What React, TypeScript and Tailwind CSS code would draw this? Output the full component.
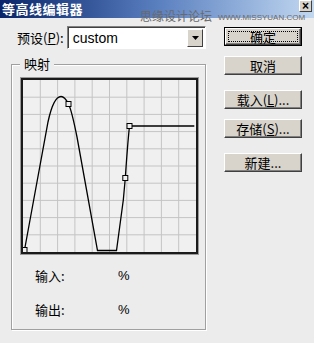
import React from "react";

const cjk = { fontFamily: '"Noto Sans CJK SC", "Liberation Sans", sans-serif' };

function Btn({ label, def = false }: { label: React.ReactNode; def?: boolean }) {
  if (def) {
    return (
      <div className="w-[78px] h-[19px] border border-black">
        <div className="w-full h-full bg-[#d8d4cc] border-t border-l border-t-white border-l-white border-r border-b border-r-[#404040] border-b-[#404040] shadow-[inset_-1px_-1px_0_#808080] flex items-center justify-center p-[2px]">
          <div className="w-full h-full border border-dotted border-black flex items-center justify-center text-[13px] leading-none text-black">
            {label}
          </div>
        </div>
      </div>
    );
  }
  return (
    <div className="w-[78px] h-[19px] bg-[#d8d4cc] border-t border-l border-t-white border-l-white border-r border-b border-r-[#404040] border-b-[#404040] shadow-[inset_-1px_-1px_0_#808080] flex items-center justify-center text-[13px] leading-none text-black">
      {label}
    </div>
  );
}

function Graph() {
  const w = 173;
  const h = 172;
  const vs = Array.from({ length: 9 }, (_, i) => ((i + 1) * w) / 10);
  const hs = Array.from({ length: 9 }, (_, i) => ((i + 1) * h) / 10);
  const markers: [number, number][] = [
    [1.5, 170],
    [45.5, 24],
    [102.3, 98],
    [106.5, 46],
  ];
  return (
    <div className="w-[179px] h-[178px] border border-[#9a9a9a]">
      <div className="w-full h-full border-2 border-[#1a1a1a] bg-[#f0f0f0]">
        <svg width={w} height={h} viewBox={`0 0 ${w} ${h}`} className="block">
          {vs.map((x) => (
            <line key={"v" + x} x1={x} y1={0} x2={x} y2={h} stroke="#c4c4c4" strokeWidth={1} />
          ))}
          {hs.map((y) => (
            <line key={"h" + y} x1={0} y1={y} x2={w} y2={y} stroke="#c4c4c4" strokeWidth={1} />
          ))}
          <path
            d="M1.5,170 L25,42 C28,28 32,16.5 38,16.5 C41,16.5 43.5,20 45.5,24 C47.5,28 51,42 54,57 L74.5,170.5 L93.5,170.5 L100.3,120 L102.3,98 C103.5,80 105,60 106.5,46 L171.3,46"
            fill="none"
            stroke="#000"
            strokeWidth={1.3}
          />
          {markers.map(([x, y]) => (
            <rect key={x + "," + y} x={x - 2.5} y={y - 2.5} width={5} height={5} fill="#f0f0f0" stroke="#000" strokeWidth={1} />
          ))}
        </svg>
      </div>
    </div>
  );
}

export default function App() {
  return (
    <div className="relative w-[314px] h-[343px] bg-[#ececec] overflow-hidden" style={cjk}>
      {/* Title bar */}
      <div className="h-[18px] bg-gradient-to-r from-[#0a246a] via-[#5a7fbf] to-[#c2d8f0]">
        <div className="pl-[2px] pt-[1px] text-[13px] font-bold text-white leading-[16px] tracking-[0.5px] whitespace-nowrap">等高线编辑器</div>
      </div>
      <div className="absolute z-10 left-[140px] top-[10px] h-[11px] flex items-end gap-[6px] whitespace-nowrap">
        <span className="shrink-0 text-[12px] leading-[11px] text-[#6a6a6a]">思缘设计论坛</span>
        <span className="shrink-0 text-[8px] leading-[7px] text-[#6a6a6a]" style={{ fontFamily: '"Liberation Sans", sans-serif' }}>
          WWW.MISSYUAN.COM
        </span>
      </div>
      <div className="absolute z-20 left-[299px] top-0 w-[13px] h-[12px] bg-[#d8d4cc] border-t border-l border-t-white border-l-white border-r border-b border-r-[#404040] border-b-[#404040] flex items-center justify-center">
        <span className="text-[12px] leading-none font-bold text-black" style={{ fontFamily: '"Liberation Sans", sans-serif' }}>
          ×
        </span>
      </div>

      {/* Body */}
      <div className="flex">
        {/* Left column */}
        <div className="ml-[11px] w-[195px]">
          <div className="mt-[8px] h-[23px] flex items-center">
            <div className="w-[56px] pl-[6px] text-[13px] text-black leading-none whitespace-nowrap">
              预设(<span className="underline">P</span>):
            </div>
            <div className="relative w-[140px] h-[23px] bg-white border-t border-l border-t-[#808080] border-l-[#808080] border-r border-b border-r-white border-b-white shadow-[inset_1px_1px_0_#404040] flex items-center">
              <span className="pl-[5px] text-[14px] text-black leading-none" style={{ fontFamily: '"Liberation Sans", sans-serif' }}>
                custom
              </span>
              <div className="absolute right-[2px] top-[2px] w-[16px] h-[18px] bg-[#d8d4cc] border-t border-l border-t-white border-l-white border-r border-b border-r-[#404040] border-b-[#404040] flex items-center justify-center">
                <svg width="7" height="4" viewBox="0 0 7 4">
                  <path d="M0,0 L7,0 L3.5,4 Z" fill="#000" />
                </svg>
              </div>
            </div>
          </div>

          {/* Group box */}
          <div className="relative mt-[15px] h-[266px] border border-[#a0a0a0] shadow-[inset_1px_1px_0_#fff,1px_1px_0_#fff]">
            <div className="absolute left-[8px] -top-[8px] px-[4px] bg-[#ececec] text-[13px] leading-[14px] text-black">映射</div>
            <div className="ml-[8px] mt-[12px]">
              <Graph />
            </div>
            <div className="mt-[11px] ml-[23px] h-[20px] flex items-center text-[13px] text-black">
              <span className="w-[83px]">输入:</span>
              <span style={{ fontFamily: '"Liberation Sans", sans-serif' }}>%</span>
            </div>
            <div className="mt-[14px] ml-[23px] h-[20px] flex items-center text-[13px] text-black">
              <span className="w-[83px]">输出:</span>
              <span style={{ fontFamily: '"Liberation Sans", sans-serif' }}>%</span>
            </div>
          </div>
        </div>

        {/* Right column */}
        <div className="ml-[18px] mt-[9px] flex flex-col">
          <Btn label="确定" def />
          <div className="mt-[10px]">
            <Btn label="取消" />
          </div>
          <div className="mt-[15px]">
            <Btn
              label={
                <span>
                  载入(<span className="underline">L</span>)...
                </span>
              }
            />
          </div>
          <div className="mt-[10px]">
            <Btn
              label={
                <span>
                  存储(<span className="underline">S</span>)...
                </span>
              }
            />
          </div>
          <div className="mt-[15px]">
            <Btn label="新建..." />
          </div>
        </div>
      </div>
    </div>
  );
}
